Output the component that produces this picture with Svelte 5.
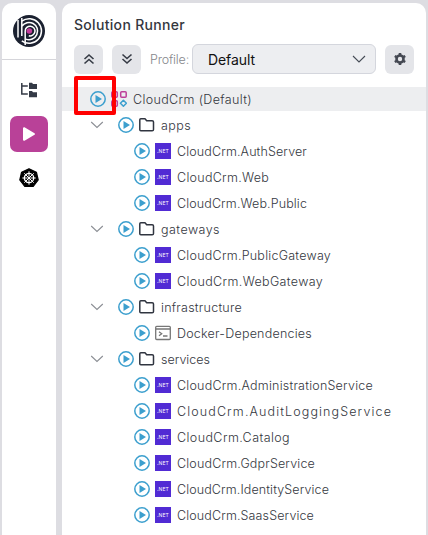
<script>
  const rows = [
    { label: 'CloudCrm (Default)', kind: 'root', width: 119 },
    { label: 'apps', kind: 'folder', width: 30 },
    { label: 'CloudCrm.AuthServer', kind: 'net', width: 130 },
    { label: 'CloudCrm.Web', kind: 'net', width: 92 },
    { label: 'CloudCrm.Web.Public', kind: 'net', width: 130 },
    { label: 'gateways', kind: 'folder', width: 59 },
    { label: 'CloudCrm.PublicGateway', kind: 'net', width: 154 },
    { label: 'CloudCrm.WebGateway', kind: 'net', width: 146 },
    { label: 'infrastructure', kind: 'folder', width: 81 },
    { label: 'Docker-Dependencies', kind: 'cli', width: 135 },
    { label: 'services', kind: 'folder', width: 49 },
    { label: 'CloudCrm.AdministrationService', kind: 'net', width: 196 },
    { label: 'CloudCrm.AuditLoggingService', kind: 'net', width: 215 },
    { label: 'CloudCrm.Catalog', kind: 'net', width: 113 },
    { label: 'CloudCrm.GdprService', kind: 'net', width: 138 },
    { label: 'CloudCrm.IdentityService', kind: 'net', width: 152 },
    { label: 'CloudCrm.SaasService', kind: 'net', width: 137 }
  ];

  // Spreads the letters so that a label takes up the given width.
  function fit(node, width) {
    const natural = node.getBoundingClientRect().width;
    node.style.letterSpacing = `${(width - natural) / node.textContent.length}px`;
  }
</script>

<div class="app">
  <aside>
    <div class="logo">
      <svg width="34" height="34" viewBox="0 0 34 34" fill="none">
        <circle cx="17" cy="17" r="16" fill="#1b2130" />
        <g stroke="#fff" stroke-width="1.500">
          <path d="M6 6v17.500M9.800 7.200A12.300 12.300 0 1 1 9.800 26.900" />
          <path d="M9.800 4v18M9.800 12.300A8.600 8.600 0 1 1 14 25.100" />
          <path d="M13.200 31V17a4.900 4.900 0 1 1 3.600 4.800" />
        </g>
        <circle cx="17.300" cy="17" r="2.800" fill="#c43c9c" />
      </svg>
    </div>
    <nav>
      <span class="nav-item">
        <svg width="18" height="16" viewBox="0 0 18 16">
          <path d="M1.800 1v11h6M1.800 4h6" fill="none" stroke="#343a46" stroke-width="1.500" />
          <path d="M9 .800h3l1 1.200h4v5H9zM9 9h3l1 1.200h4v5H9z" fill="#343a46" />
        </svg>
      </span>
      <span class="nav-item active">
        <svg width="14" height="16" viewBox="0 0 14 16"><path d="M2 2.200v11.600L12 8z" fill="#fff" stroke="#fff" stroke-width="2" stroke-linejoin="round" /></svg>
      </span>
      <span class="nav-item">
        <svg width="20" height="20" viewBox="0 0 20 20">
          <path d="M10 .8 17.400 4.200 19.200 12 14.200 18.500H5.800L.8 12 2.600 4.200z" fill="#000" stroke="#000" stroke-width="1.200" stroke-linejoin="round" />
          <g stroke="#fff" fill="none">
            <circle cx="10" cy="10" r="4.700" stroke-width="1.300" />
            <path d="M10 3.300v5.200M10 11.500v5.200M3.300 10h5.200M11.500 10h5.200M5.300 5.300 9 9M11 11l3.700 3.700M14.700 5.300 11 9M9 11l-3.700 3.700" stroke-width="1" />
          </g>
          <circle cx="10" cy="10" r="1.300" fill="#fff" />
        </svg>
      </span>
    </nav>
  </aside>

  <main>
    <h1><span use:fit={111}>Solution Runner</span></h1>
    <div class="toolbar">
      <button aria-label="Collapse all">
        <svg width="12" height="12" viewBox="0 0 12 12"><path d="m1.500 6 4.500-4 4.500 4M1.500 10.500l4.500-4 4.500 4" /></svg>
      </button>
      <button class="second" aria-label="Expand all">
        <svg width="12" height="12" viewBox="0 0 12 12"><path d="m1.500 1.500 4.500 4 4.500-4M1.500 6l4.500 4 4.500-4" /></svg>
      </button>
      <label class="profile" for="profile"><span use:fit={39}>Profile:</span></label>
      <div class="select" id="profile">
        <span use:fit={47}>Default</span>
        <svg width="14" height="9" viewBox="0 0 14 9"><path d="m1 1 6 6 6-6" fill="none" stroke="#454b55" stroke-width="1.100" /></svg>
      </div>
      <button class="gear" aria-label="Settings">
        <svg width="14" height="14" viewBox="0 0 14 14">
          <circle cx="7" cy="7" r="3.500" />
          <path d="M7 1v2M7 11v2M1.800 4l1.700 1M10.500 9l1.700 1M12.200 4l-1.700 1M3.500 9l-1.700 1" />
        </svg>
      </button>
    </div>

    <div class="tree">
      {#each rows as row}
        <div class="row {row.kind}">
          {#if row.kind === 'folder'}
            <svg class="chevron" width="14" height="8" viewBox="0 0 14 8"><path d="m1.200 1 5.800 5.500L12.800 1" fill="none" stroke="#8b8e94" stroke-width="1.100" /></svg>
          {/if}
          <svg class="play" width="16" height="16" viewBox="0 0 16 16">
            <circle cx="8" cy="8" r="7.200" fill="none" stroke="#3c9fce" stroke-width="1.500" />
            <path d="M5.500 4v8L12 8z" fill="#3c9fce" />
          </svg>
          {#if row.kind === 'root'}
            <svg class="type" width="16" height="16" viewBox="0 0 16 16" fill="none" stroke="#bd4099" stroke-width="1.500">
              <rect x=".8" y=".8" width="5.500" height="5.500" rx="1" />
              <rect x="9.700" y=".8" width="5.500" height="5.500" rx="1" />
              <rect x=".8" y="9.700" width="5.500" height="5.500" rx="1" />
              <path d="m12.400 9.300 3 3-3 3-3-3z" stroke="#3c9fce" stroke-linejoin="round" />
            </svg>
          {:else if row.kind === 'folder'}
            <svg class="type" width="16" height="16" viewBox="0 0 16 16"><path d="M.800 12.800V2.700q0-1 1-1h4.200l1.700 2h5.500q1.300 0 1.300 1.300v7.500q0 1.300-1.300 1.300H1.800q-1 0-1-1z" fill="none" stroke="#303540" stroke-width="1.500" stroke-linejoin="round" /></svg>
          {:else if row.kind === 'cli'}
            <svg class="type" width="16" height="16" viewBox="0 0 16 16" fill="none" stroke="#777" stroke-width="1.300">
              <rect x=".7" y="1.300" width="14.600" height="13.200" rx="1" />
              <path d="M1 4h14M4 6.700l2.700 2L4 10.700M8 11h4.500" />
            </svg>
          {:else}
            <span class="badge"><span use:fit={12}>.NET</span></span>
          {/if}
          <span class="label"><span use:fit={row.width}>{row.label}</span></span>
        </div>
      {/each}
    </div>
    <div class="highlight"></div>
  </main>
</div>

<style>
  .app {
    box-sizing: border-box;
    display: flex;
    gap: 6px;
    width: 428px;
    height: 535px;
    padding: 3px 2px 0;
    overflow: hidden;
    background: #dddde2;
    font-family: Inter, "Open Sans", sans-serif;
    color: #34373e;
  }
  svg { display: block; flex: none; }
  span { white-space: nowrap; }
  aside {
    width: 54px;
    flex: none;
    background: #fff;
    border-radius: 10px 10px 0 0;
  }
  .logo {
    box-sizing: border-box;
    height: 57px;
    padding: 11px 0 0 10px;
    border-bottom: 1px solid #d5d5da;
  }
  nav {
    display: flex;
    flex-direction: column;
    align-items: center;
    padding-top: 12px;
    gap: 8px;
  }
  .nav-item {
    display: grid;
    place-items: center;
    width: 38px;
    height: 36px;
    border-radius: 7px;
  }
  .active { background: #b94198; }
  main {
    position: relative;
    width: 364px;
    background: #fff;
    border-radius: 10px 10px 0 0;
  }
  h1 {
    margin: 0;
    padding: 12px 0 0 12px;
    height: 29px;
    line-height: 20px;
    font-size: 14px;
    font-weight: 450;
  }
  .toolbar {
    display: flex;
    align-items: center;
    height: 30px;
    padding-left: 12px;
  }
  button {
    display: grid;
    place-items: center;
    flex: none;
    box-sizing: border-box;
    width: 29px;
    height: 29px;
    padding: 0;
    border: 0;
    border-radius: 6px;
    background: #e4e5e9;
  }
  button svg { fill: none; stroke: #363b45; stroke-width: 1.6; }
  .second { margin-left: 9px; }
  .gear { margin-left: 9px; }
  .gear svg { stroke: #444852; stroke-width: 2.6; }
  .profile {
    width: 42px;
    margin-left: 9px;
    font-size: 12.500px;
    font-weight: 300;
    color: #85878c;
  }
  .select {
    display: flex;
    align-items: center;
    justify-content: space-between;
    box-sizing: border-box;
    width: 184px;
    height: 30px;
    padding: 0 9px 0 15px;
    border: 1px solid #d4d6dd;
    border-radius: 6px;
    background: #edeef1;
    color: #111;
    font-size: 14px;
  }
  .tree {
    display: flex;
    flex-direction: column;
    gap: 2px;
    padding-top: 13px;
  }
  .row {
    display: flex;
    align-items: center;
    height: 24px;
    padding-left: 72px;
  }
  .root { padding-left: 28px; background: #edeef0; }
  .folder { padding-left: 28px; }
  .chevron { margin-right: 14px; }
  .type, .badge { margin-left: 5px; }
  .badge {
    display: flex;
    align-items: center;
    justify-content: center;
    flex: none;
    width: 16px;
    height: 16px;
    background: #512bd4;
    color: #fff;
    font-size: 5px;
    font-weight: 400;
  }
  .label {
    margin-left: 6px;
    padding-top: 2px;
    line-height: 20px;
    font-size: 12.500px;
    font-weight: 350;
  }
  .highlight {
    position: absolute;
    left: 12px;
    top: 73px;
    box-sizing: border-box;
    width: 42px;
    height: 39px;
    border: 4px solid #f00;
    border-radius: 2px;
  }
</style>
